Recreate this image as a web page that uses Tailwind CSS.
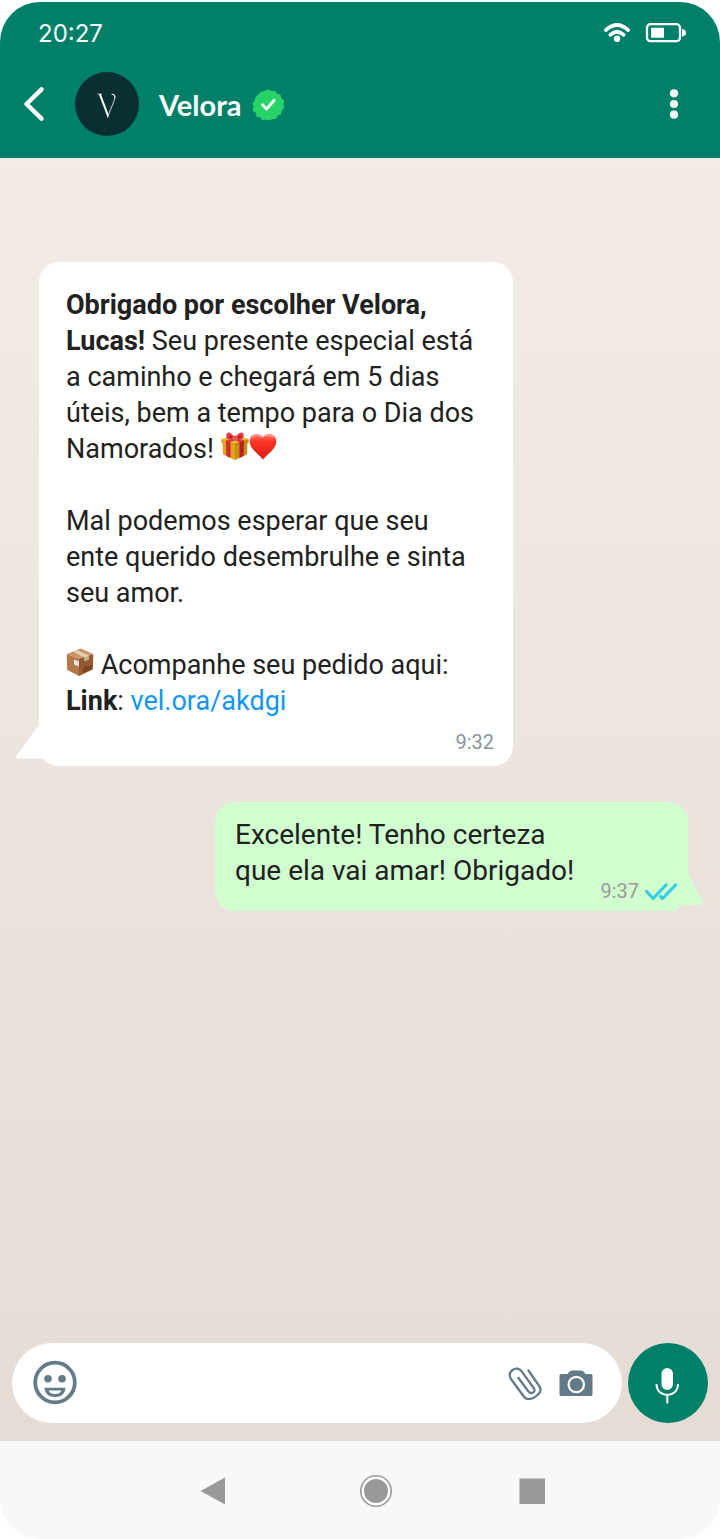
<!DOCTYPE html>
<html lang="pt-BR">
<head>
<meta charset="utf-8">
<meta name="viewport" content="width=device-width, initial-scale=1">
<title>Velora</title>
<script src="https://cdn.jsdelivr.net/npm/@tailwindcss/browser@4"></script>
</head>
<body class="bg-white font-['Roboto',sans-serif] text-[#212121]">
<div class="flex min-h-screen flex-col pt-0.5">
  <header class="rounded-t-[40px] bg-[#008069] pb-3.5 text-white">
    <div class="flex h-[62px] items-center justify-between pr-[33px] pl-[38px]">
      <time class="pt-0.5 font-['Inter',sans-serif] text-2xl">20:27</time>
      <div class="flex items-center gap-3.5">
        <svg class="h-5 w-7" viewBox="0 0 28 20" fill="none" stroke="#fff" stroke-width="3.6" stroke-linecap="round"><path d="M2.8 7.1Q14-3.100 25.200 7.100M7.300 11.800Q14 5.700 20.700 11.800"/><circle cx="14" cy="15.800" r="3.200" fill="#fff" stroke="none"/></svg>
        <svg class="h-5 w-[42px]" viewBox="0 0 42 20"><rect x="2" y="1.200" width="33" height="17" rx="3.500" fill="none" stroke="#fff" stroke-width="2.300"/><path d="M6 4.700h13v10H6zM37 5.900q4 .6 4 3.800t-4 3.800z" fill="#fff"/></svg>
      </div>
    </div>
    <div class="flex h-20 items-center pr-8 pl-5">
      <button type="button" aria-label="Voltar" class="mr-[27px]"><svg class="block h-9 w-7" viewBox="0 0 28 36" fill="none" stroke="#fff" stroke-width="4.500" stroke-linecap="round" stroke-linejoin="round"><path d="M21.500 3.300 6.500 18l15 14.700"/></svg></button>
      <svg class="h-16 w-16" viewBox="0 0 64 64"><circle cx="32" cy="32" r="32" fill="#0a2f33"/><path d="M22 21.700h5.200v.6h-1.200l7.600 20.200-.8 3.500L23.800 22.300H22z" fill="#fff"/><path d="M32.800 45.500c1-6 7-15.500 7-20.500 0-2-1-2.700-2.300-2.700" fill="none" stroke="#fff" stroke-width=".8"/><path d="M36.500 21.800q4.600 0 3.800 5-1.200-4.200-3.800-4.300z" fill="#fff"/></svg>
      <h1 class="ml-5 pt-0.5 font-['Lato',sans-serif] text-[29px] font-bold leading-9">Velora</h1>
      <svg class="ml-2.5 h-8 w-8" viewBox="0 0 32 32" role="img" aria-label="Verificado"><g fill="#25d366"><circle cx="16" cy="16.500" r="14"/><path d="m16 1.100 3.100 2.100 3.700-.7 2 3.200 3.700.9.700 3.700 3 2.300-.9 3.700 1 3.600-2.700 2.600-.4 3.800-3.500 1.400-1.700 3.400-3.800-.1-2.900 2.400-3.300-1.800-3.700.7-2.100-3.100-3.700-.8-.8-3.700-3-2.300.8-3.700-1-3.600 2.700-2.700.3-3.700 3.400-1.500 1.700-3.400 3.800.1z"/></g><path d="m10.500 16.800 4 4.200 7.700-8.700" fill="none" stroke="#fff" stroke-width="2.800" stroke-linecap="round" stroke-linejoin="round"/></svg>
      <button type="button" aria-label="Mais opções" class="ml-auto"><svg class="block h-8 w-7" viewBox="0 0 28 32" fill="#f2f2f2"><circle cx="14" cy="5.300" r="4.100"/><circle cx="14" cy="16" r="4.100"/><circle cx="14" cy="26.700" r="4.100"/></svg></button>
    </div>
  </header>

  <div class="flex grow flex-col bg-linear-to-b from-[#f3ece6] to-[#e4dcd5]">
    <main class="flex grow flex-col gap-9 pt-[104px] pr-8 pl-[39px]">
      <article class="relative w-[474px] max-w-full rounded-[20px] bg-white px-[27px] pt-[25px] pb-3">
        <svg class="absolute bottom-[7px] -left-6 h-9 w-8" viewBox="0 0 32 36" fill="#fff"><path d="M24.500 1 1.300 33q-1 2.200 1.200 2.600H32V1z"/></svg>
        <div class="text-[27px] leading-9">
          <p><strong>Obrigado por escolher Velora,<br>Lucas!</strong> Seu presente especial está<br>a caminho e chegará em 5 dias<br>úteis, bem a tempo para o Dia dos<br>Namorados!
            <svg class="-mt-2.5 inline-block h-7 w-7 align-middle" viewBox="0 0 28 28" role="img" aria-label="Presente"><path d="M1.500 10 14 14.500V28L2 22.500z" fill="#dfa31d"/><path d="M26.500 10 14 14.500V28l12-5.500z" fill="#c98e10"/><path d="M.5 7 14 3l13.500 4v3.500L14 15 .5 10.500z" fill="#ecbc35"/><path d="m.5 7 13.500 4.500V15L.5 10.500z" fill="#dca41e"/><path d="M14 11.500 27.500 7v3.500L14 15z" fill="#c28812"/><path d="m5 8.500 4.500 1.500v16L5.500 24z" fill="#cf2a31"/><path d="m23 8.500-4.500 1.500v16l4-2z" fill="#b81f2a"/><path d="m5 8.500 14-4.500 3.500 1.200L9.500 10zM23 8.500 9 4 5.500 5.200 18.500 10z" fill="#dc3540"/><path d="M14 6.500C10.500-.8 5-.8 5.500 3.200 4 6.500 8 9 14 7.500c6 1.500 10-1 8.500-4.300.5-4-5-4-8.500 3.300z" fill="#e23c48"/><path d="M7.500 3.500q3-.5 5 2.500-4 1-5-2.500zM20.500 3.500q-3-.5-5 2.500 4 1 5-2.500z" fill="#a91a28"/><rect x="11.500" y="4" width="5" height="4.500" rx="1.500" fill="#f0535c"/></svg><svg class="-mt-2.5 inline-block h-7 w-7 align-middle" viewBox="0 0 28 28" role="img" aria-label="Coração"><defs><linearGradient id="heart" x1="0" y1="0" x2="0" y2="1"><stop offset="0" stop-color="#ff7b6b"/><stop offset=".3" stop-color="#fa3527"/><stop offset="1" stop-color="#e3160e"/></linearGradient></defs><path d="M14 5.500C12 .3 1 .2.700 9.200.500 17 9.500 21.500 14 27.500 18.500 21.500 27.500 17 27.300 9.200 27 .2 16 .3 14 5.500z" fill="url(#heart)"/><path d="M3.500 5.500Q7.500 1 12 5M16.500 4.500q4-3.500 8 .8" fill="none" stroke="#ffb1a5" stroke-width="1.500" opacity=".7"/></svg></p>
          <p class="mt-9">Mal podemos esperar que seu<br>ente querido desembrulhe e sinta<br>seu amor.</p>
          <p class="mt-9"><svg class="-mt-2.5 inline-block h-7 w-7 align-middle" viewBox="0 0 28 28" role="img" aria-label="Pacote"><path d="M.700 6 13 10.500V28L1.200 22z" fill="#b4794a"/><path d="M27.300 6 13 10.500V28l13.800-6.500z" fill="#94592e"/><path d="M.700 6 14.500.5 27.300 6 13 10.500z" fill="#cb9667"/><path d="m7 3.500 3.500-1.500L23 7.500v4L18.500 13V9.500z" fill="#e6cfb5"/><path d="m18.500 9.500 4.500-2v4l-4.500 1.500z" fill="#c8ad91"/><path d="m8 11.500 5 2v5l-5-2z" fill="#e7e4e0"/><path d="m18 20 3-1.500v4l-3 1.500zM23 18v4M25 17v4" fill="none" stroke="#5e3518"/></svg> Acompanhe seu pedido aqui:</p>
          <p><strong>Link</strong>: <a href="#" class="text-[#1196f5]">vel.ora/akdgi</a></p>
        </div>
        <time class="mt-[11px] -mr-2 block text-right text-xl leading-6 text-[#8696a0]">9:32</time>
      </article>

      <article class="relative flex w-[473px] max-w-full items-end justify-between self-end rounded-[20px] bg-[#d0fecf] pt-[15px] pr-[11px] pb-2 pl-5">
        <svg class="absolute -right-4 bottom-1.5 h-8 w-6" viewBox="0 0 24 32" fill="#d0fecf"><path d="M7.500 0 23.500 30.500Q24 31.700 22.500 32H0V0z"/></svg>
        <p class="mb-3.5 text-[28px] leading-9">Excelente! Tenho certeza<br>que ela vai amar! Obrigado!</p>
        <div class="relative flex items-center gap-1.5">
          <time class="text-xl leading-6 text-[#999]">9:37</time>
          <svg class="h-5 w-8" viewBox="0 0 32 20" fill="none" stroke="#34cde4" stroke-width="3.200" stroke-linecap="round" stroke-linejoin="round" role="img" aria-label="Lida"><path d="m1.700 10.500 6.300 7L21 4M15.500 15.500l2.200 2L30.500 4"/></svg>
        </div>
      </article>
    </main>

    <form class="flex items-center gap-1.5 pr-3 pb-[18px] pl-3">
      <div class="flex h-20 min-w-0 grow items-center rounded-full bg-white pr-7 pl-5">
        <button type="button" aria-label="Emojis"><svg class="block h-[46px] w-[46px]" viewBox="0 0 46 46" fill="#637a88"><circle cx="23" cy="22.500" r="19.800" fill="none" stroke="#637a88" stroke-width="3.800"/><circle cx="16" cy="18.800" r="3.800"/><circle cx="30" cy="18.800" r="3.800"/><path fill-rule="evenodd" d="M12.300 27.700h21.400Q32.500 37 23 37T12.300 27.700zm4.200 2.800q1.500 3.500 6.500 3.500t6.500-3.500z"/></svg></button>
        <input type="text" aria-label="Mensagem" class="h-full min-w-0 grow px-3 text-[28px] outline-none">
        <button type="button" aria-label="Anexar" class="mr-4"><svg class="block h-[34px] w-[34px]" viewBox="0 0 34 34" fill="none" stroke="#637a88" stroke-width="2.300" stroke-linecap="round" stroke-linejoin="round"><path d="m20.500 4.500 11 16c2 3 1 6-2 8.500-3.500 3.500-6.500 4-9.500 4-2 0-3-.8-4.200-2.500L3 13C1 9.500 1.800 6 4.500 4c2.800-2 7-1.700 9 1.200L26 22.500c1.500 2.300-.5 4.500-2.500 4.500-1.800 0-2.600-.7-3.600-2.200L10.500 12"/></svg></button>
        <button type="button" aria-label="Câmera"><svg class="block h-[34px] w-9" viewBox="0 0 36 34"><path d="M3 8h6.500l1.500-2q1-1.500 3-1.500h9q2 0 3 1.500l1.500 2H33q1.500 0 1.500 1.500v19Q34.500 30 33 30H3q-1.500 0-1.500-1.500v-19Q1.500 8 3 8z" fill="#637a88"/><circle cx="18.300" cy="18.500" r="7.700" fill="none" stroke="#fff" stroke-width="2.200"/></svg></button>
      </div>
      <button type="button" aria-label="Gravar áudio" class="flex h-20 w-20 shrink-0 items-center justify-center rounded-full bg-[#008069]"><svg class="h-20 w-20" viewBox="0 0 80 80" fill="none"><rect x="33.500" y="25" width="11.500" height="22" rx="5.750" fill="#fff"/><path d="M28.500 41c0 14.500 21.500 14.500 21.500 0M39.300 52v8.500" stroke="#fff" stroke-width="2"/></svg></button>
    </form>
  </div>

  <nav aria-label="Navegação" class="flex h-[98px] items-center justify-center gap-[120px] rounded-b-[40px] bg-[#f7f8fa] pt-0.5 pl-[26px]">
    <button type="button" aria-label="Voltar" class="mr-1.5"><svg class="block h-9 w-9" viewBox="0 0 36 36"><path d="M29 4.500v27L4.500 18z" fill="#999"/></svg></button>
    <button type="button" aria-label="Início"><svg class="block h-9 w-9" viewBox="0 0 36 36" fill="#999"><circle cx="18" cy="18" r="15.200" fill="#fff" stroke="#999" stroke-width="1.600"/><circle cx="18" cy="18" r="12"/></svg></button>
    <button type="button" aria-label="Recentes"><svg class="block h-9 w-9" viewBox="0 0 36 36"><path d="M5.500 5.500h25.500v25.500H5.500z" fill="#999"/></svg></button>
  </nav>
</div>
</body>
</html>
